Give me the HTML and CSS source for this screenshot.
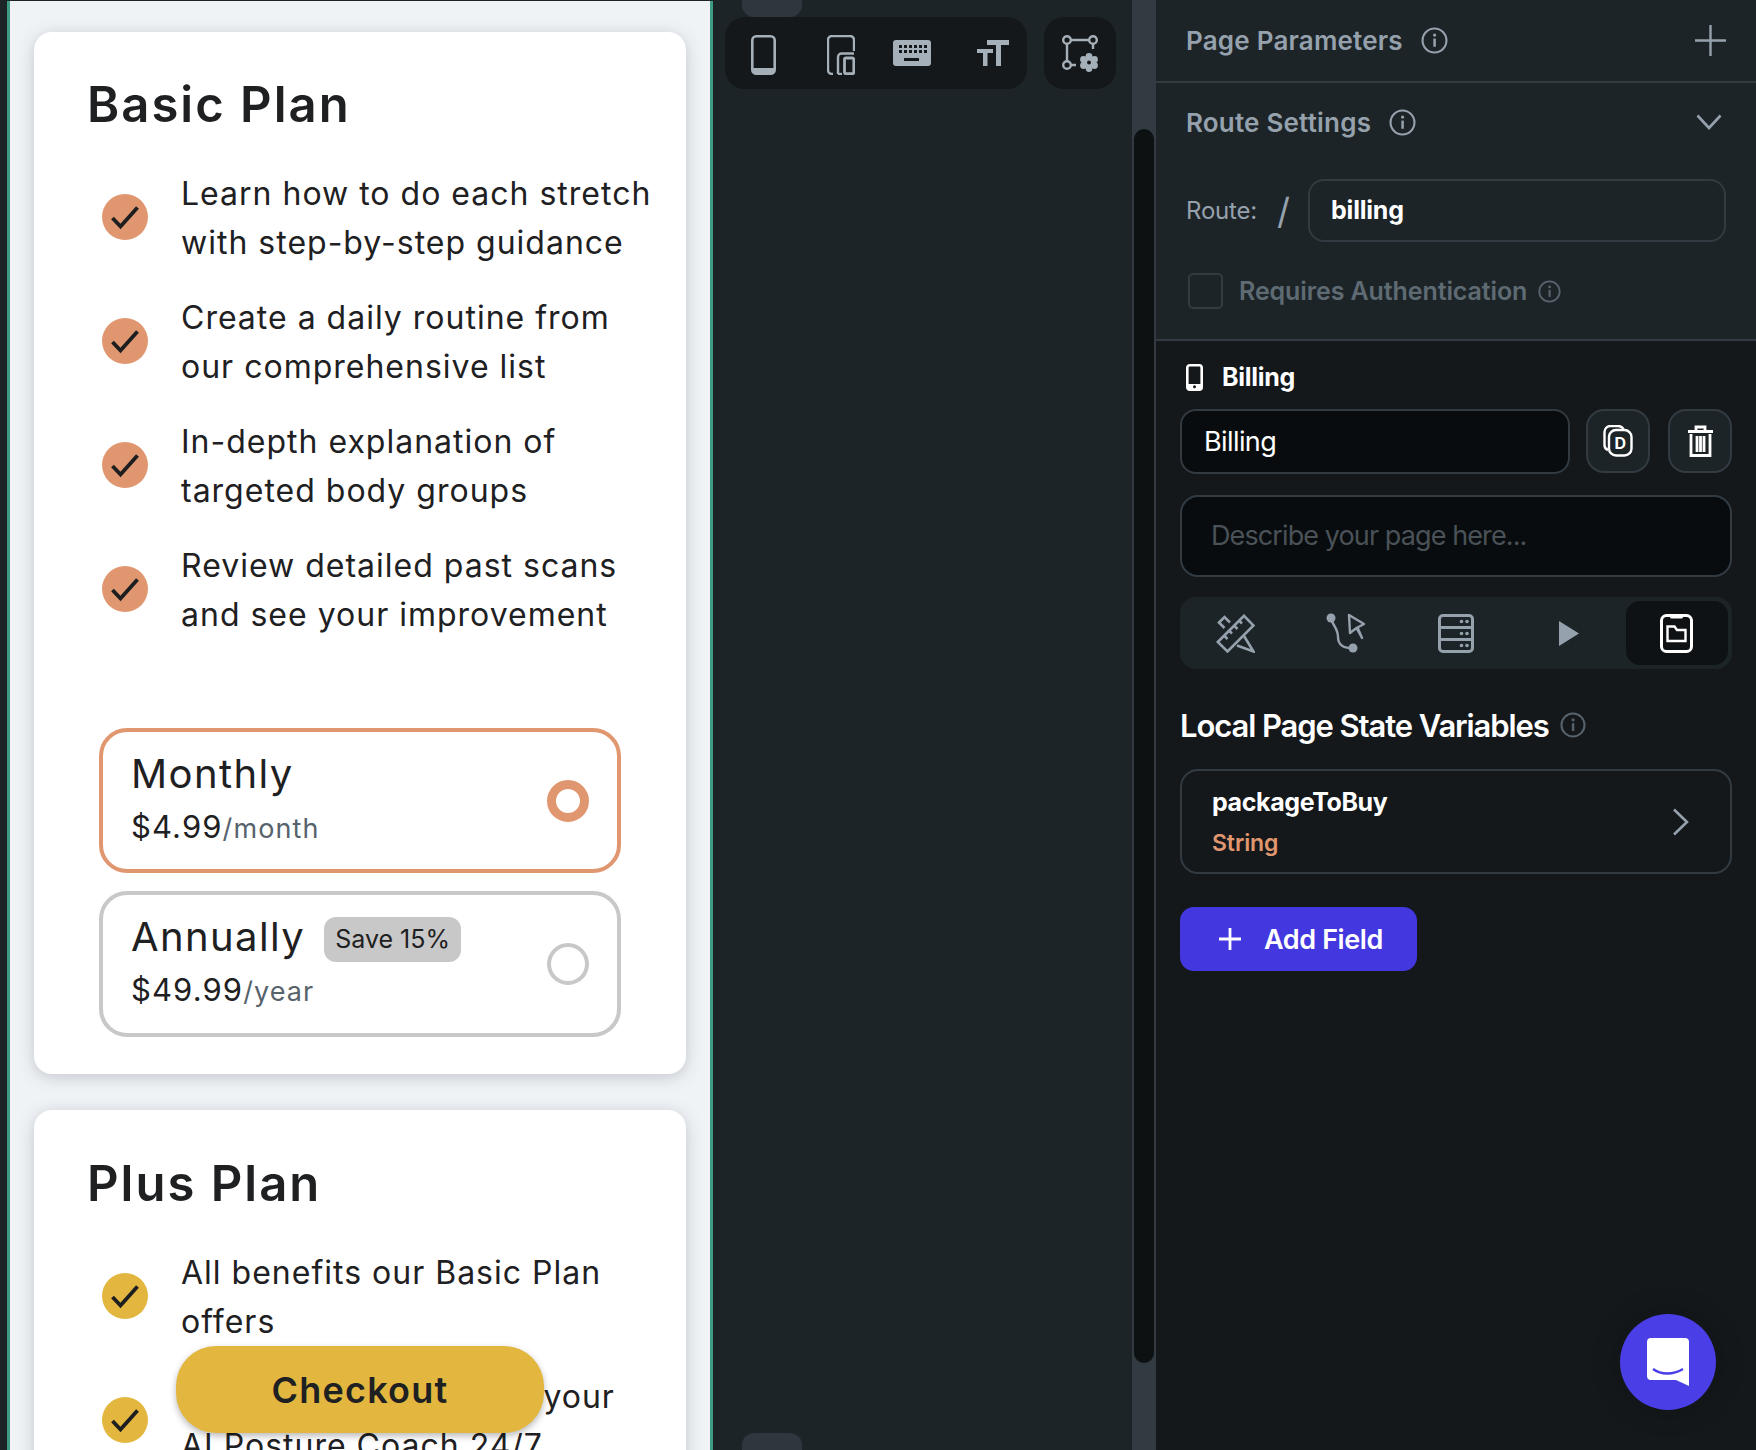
FILE: index.html
```html
<!DOCTYPE html>
<html lang="en">
<head>
<meta charset="utf-8">
<title>Billing</title>
<link rel="stylesheet" href="styles.css">
</head>
<body>
<svg class="defs" width="0" height="0" aria-hidden="true">
  <symbol id="info" viewBox="0 0 28 28"><circle cx="14" cy="14" r="12.4" fill="none" stroke="currentColor" stroke-width="2.2"/><rect x="12.8" y="12" width="2.6" height="8.5" fill="currentColor"/><circle cx="14.1" cy="8.4" r="1.7" fill="currentColor"/></symbol>
  <symbol id="check" viewBox="0 0 46 46"><circle cx="23" cy="23" r="23" fill="currentColor"/><path d="M10.500 24 L18.500 32.500 L35.500 13.500" fill="none" stroke="#1c1e20" stroke-width="3.800"/></symbol>
</svg>
<main class="app">
  <section class="preview">
    <article class="plan">
      <h2 class="plan-title">Basic Plan</h2>
      <ul class="features peach">
        <li class="feature"><svg class="tick"><use href="#check"/></svg><p>Learn how to do each stretch<br>with step-by-step guidance</p></li>
        <li class="feature"><svg class="tick"><use href="#check"/></svg><p>Create a daily routine from<br>our comprehensive list</p></li>
        <li class="feature"><svg class="tick"><use href="#check"/></svg><p>In-depth explanation of<br>targeted body groups</p></li>
        <li class="feature"><svg class="tick"><use href="#check"/></svg><p>Review detailed past scans<br>and see your improvement</p></li>
      </ul>
      <div class="options">
        <div class="option selected">
          <div class="option-text">
            <div class="option-name">Monthly</div>
            <div class="option-price">$4.99<span class="per">/month</span></div>
          </div>
          <span class="radio"></span>
        </div>
        <div class="option">
          <div class="option-text">
            <div class="option-name">Annually <span class="badge">Save 15%</span></div>
            <div class="option-price">$49.99<span class="per">/year</span></div>
          </div>
          <span class="radio"></span>
        </div>
      </div>
    </article>
    <article class="plan">
      <h2 class="plan-title">Plus Plan</h2>
      <ul class="features gold">
        <li class="feature"><svg class="tick"><use href="#check"/></svg><p>All benefits our Basic Plan<br>offers</p></li>
        <li class="feature"><svg class="tick"><use href="#check"/></svg><p>Unlimited advice from your<br>AI Posture Coach 24/7</p></li>
      </ul>
    </article>
    <button class="checkout">Checkout</button>
  </section>

  <section class="canvas">
    <span class="handle handle-top"></span>
    <span class="handle handle-bottom"></span>
    <div class="toolbars">
      <div class="toolbar tools">
        <svg class="t-phone" width="25" height="40" viewBox="0 0 25 40"><rect x="1.3" y="1.3" width="22.4" height="37.4" rx="4" fill="none" stroke="currentColor" stroke-width="2.6"/><path d="M1.3 33h22.4v2a4 4 0 0 1-4 4H5.300a4 4 0 0 1-4-4z" fill="currentColor"/></svg>
        <svg class="t-tablet" width="28" height="40" viewBox="0 0 28 40"><path d="M27 16V5a4 4 0 0 0-4-4H5a4 4 0 0 0-4 4v30a4 4 0 0 0 4 4h1" fill="none" stroke="currentColor" stroke-width="2.400"/><path d="M11 39v-17a3.500 3.500 0 0 1 3.500-3.500H27" fill="none" stroke="currentColor" stroke-width="2.400"/><path d="M11 39h4" stroke="currentColor" stroke-width="2.400"/><rect x="17.500" y="23" width="9.300" height="15.700" rx="1.500" fill="none" stroke="currentColor" stroke-width="2.800"/></svg>
        <svg class="t-keys" width="38" height="26" viewBox="0 0 38 26"><rect width="38" height="26" rx="3" fill="currentColor"/><g fill="#14181b"><rect x="6" y="5" width="3" height="3"/><rect x="11" y="5" width="3" height="3"/><rect x="16" y="5" width="3" height="3"/><rect x="21" y="5" width="3" height="3"/><rect x="26" y="5" width="3" height="3"/><rect x="31" y="5" width="3" height="3"/><rect x="6" y="10" width="3" height="3"/><rect x="11" y="10" width="3" height="3"/><rect x="16" y="10" width="3" height="3"/><rect x="21" y="10" width="3" height="3"/><rect x="26" y="10" width="3" height="3"/><rect x="31" y="10" width="3" height="3"/><rect x="11" y="18" width="15" height="3"/></g></svg>
        <svg class="t-size" width="32" height="26" viewBox="0 0 32 26"><path d="M10 0h22v5h-8v21h-5V5h-9zM0 9h16v4h-5.500v13H6V13H0z" fill="currentColor"/></svg>
      </div>
      <div class="toolbar graph">
        <svg width="36" height="37" viewBox="0 0 36 37"><g fill="none" stroke="currentColor" stroke-width="2.400"><circle cx="5" cy="5" r="3.800"/><circle cx="31" cy="5" r="3.800"/><circle cx="5" cy="30" r="3.800"/><path d="M9 5h18M5 9v17M9 30h5M31 9v5"/></g><g fill="currentColor"><circle cx="27" cy="21.500" r="3.400"/><circle cx="27" cy="33.500" r="3.400"/><circle cx="21.500" cy="24.500" r="3.400"/><circle cx="32.500" cy="24.500" r="3.400"/><circle cx="21.500" cy="30.500" r="3.400"/><circle cx="32.500" cy="30.500" r="3.400"/><circle cx="27" cy="27.500" r="4"/></g><circle cx="27" cy="27.500" r="2" fill="#14181b"/></svg>
      </div>
    </div>
  </section>

  <div class="scrolltrack"><span class="scrollthumb"></span></div>

  <aside class="panel">
    <div class="panel-top">
      <div class="section-row line">
        <div class="section-head"><h3>Page Parameters</h3><svg class="info-lg"><use href="#info"/></svg></div>
        <svg class="plus-icon" width="31" height="31" viewBox="0 0 31 31"><path d="M15.500 0v31M0 15.500h31" stroke="currentColor" stroke-width="2.400"/></svg>
      </div>
      <div class="section-row route-head">
        <div class="section-head"><h3>Route Settings</h3><svg class="info-lg"><use href="#info"/></svg></div>
        <svg class="chev-down" width="26" height="16" viewBox="0 0 26 16"><path d="M1.500 1.500 L13 14 L24.500 1.500" fill="none" stroke="currentColor" stroke-width="2.600"/></svg>
      </div>
      <div class="route">
        <span class="route-label">Route:</span>
        <span class="route-slash">/</span>
        <div class="route-input">billing</div>
      </div>
      <div class="auth">
        <span class="checkbox"></span>
        <span class="auth-label">Requires Authentication</span>
        <svg class="info-sm"><use href="#info"/></svg>
      </div>
    </div>

    <div class="panel-bottom">
      <div class="page-head">
        <svg width="17" height="27" viewBox="0 0 17 27"><rect x="1.300" y="1.300" width="14.400" height="24.400" rx="2.500" fill="none" stroke="#fff" stroke-width="2.600"/><path d="M1.300 20h14.400v4a2 2 0 0 1-2 2H3.300a2 2 0 0 1-2-2z" fill="#fff"/><circle cx="8.500" cy="22.800" r="1.500" fill="#14181b"/></svg>
        <span>Billing</span>
      </div>
      <div class="name-row">
        <div class="name-input">Billing</div>
        <button class="square-btn">
          <svg width="30" height="32" viewBox="0 0 30 32"><path d="M5 25 A5 5 0 0 1 1.500 20V7a6 6 0 0 1 6-6h8a6 6 0 0 1 5 3" fill="none" stroke="#fff" stroke-width="2.400"/><rect x="6" y="5" width="22.500" height="25.500" rx="7" fill="none" stroke="#fff" stroke-width="2.400"/><text x="17.300" y="24" class="dup-letter">D</text></svg>
        </button>
        <button class="square-btn">
          <svg width="25" height="32" viewBox="0 0 25 32"><path d="M0 6.500h25M8 6V2h9v4" fill="none" stroke="#fff" stroke-width="2.800"/><path d="M3 9v21.500h19V9M9 11v16M12.500 11v16M16 11v16" fill="none" stroke="#fff" stroke-width="2.800"/></svg>
        </button>
      </div>
      <div class="desc-input">Describe your page here...</div>
      <div class="tabs">
        <div class="tab">
          <svg width="39" height="39" viewBox="0 0 39 39"><g fill="none" stroke="currentColor" stroke-width="2.600"><path d="M1.800 28 L28 1.800 L37.500 11.500 L11.500 37.500 Z"/><path d="M8 21.500l3.500 3.500M13 16.500l3 3M18 11.500l3.500 3.500M23 6.500l3 3"/><path d="M14 8.500 L8.500 3 L3 8.500 L8.500 14"/><path d="M28 22 L37.500 37.500 L21 31.500"/></g></svg>
        </div>
        <div class="tab">
          <svg width="40" height="40" viewBox="0 0 40 40"><circle cx="5" cy="5" r="4.500" fill="currentColor"/><circle cx="27" cy="35" r="4.500" fill="currentColor"/><path d="M5 6 C8 14 12 16 12 24 C12 32 18 35 25 35" fill="none" stroke="currentColor" stroke-width="2.400"/><path d="M23 2 L38 11 L31.500 14.500 L36 25 L30.500 15 L24 20 Z" fill="none" stroke="currentColor" stroke-width="2.400" stroke-linejoin="round"/></svg>
        </div>
        <div class="tab">
          <svg width="36" height="39" viewBox="0 0 36 39"><rect x="1.500" y="1.500" width="33" height="36" rx="3.500" fill="none" stroke="currentColor" stroke-width="3"/><path d="M1 13.500h34M1 25.500h34" stroke="currentColor" stroke-width="2.800"/><g fill="currentColor"><circle cx="23.500" cy="7.500" r="1.800"/><circle cx="29" cy="7.500" r="1.800"/><circle cx="23.500" cy="19.500" r="1.800"/><circle cx="29" cy="19.500" r="1.800"/><circle cx="23.500" cy="31.500" r="1.800"/><circle cx="29" cy="31.500" r="1.800"/></g></svg>
        </div>
        <div class="tab tab-play">
          <svg width="20" height="25" viewBox="0 0 20 25"><path d="M0 0 L20 12.500 L0 25 Z" fill="currentColor"/></svg>
        </div>
        <div class="tab active">
          <svg width="33" height="39" viewBox="0 0 33 39"><rect x="1.500" y="1.500" width="30" height="36" rx="5" fill="none" stroke="#fff" stroke-width="3"/><path d="M10 1.500h13v1.500a1.500 1.500 0 0 1-1.500 1.500h-10A1.500 1.500 0 0 1 10 3z" fill="#fff"/><path d="M7.500 12.500h7l2.500 3.500h8.500v11h-18z" fill="none" stroke="#fff" stroke-width="2.400"/></svg>
        </div>
      </div>
      <div class="state-head"><h4>Local Page State Variables</h4><svg class="info-md"><use href="#info"/></svg></div>
      <div class="var-card">
        <div class="var-text">
          <div class="var-name">packageToBuy</div>
          <div class="var-type">String</div>
        </div>
        <svg class="chev-right" width="17" height="28" viewBox="0 0 17 28"><path d="M2 1.500 L15 14 L2 26.500" fill="none" stroke="currentColor" stroke-width="2.600"/></svg>
      </div>
      <button class="add-field">
        <svg width="22" height="22" viewBox="0 0 22 22"><path d="M11 0v22M0 11h22" stroke="#fff" stroke-width="2.800"/></svg>
        <span>Add Field</span>
      </button>
    </div>
    <button class="chat" aria-label="Chat">
      <svg width="42" height="48" viewBox="0 0 42 48"><path d="M4 0h34a4 4 0 0 1 4 4v44l-13-6H4a4 4 0 0 1-4-4V4a4 4 0 0 1 4-4z" fill="#fff"/><path d="M6 31 C14 37 26 37 36 31" fill="none" stroke="#4a3ee6" stroke-width="2.400"/></svg>
    </button>
  </aside>
</main>
</body>
</html>
```
FILE: styles.css
```css
* { box-sizing: border-box; }
html, body { margin: 0; padding: 0; height: 1450px; overflow: hidden; }
body { background: #1c2427; font-family: "Inter", "Liberation Sans", sans-serif; color: #14181b; }
button { font-family: inherit; border: 0; padding: 0; }
h2, h3, h4, p, ul { margin: 0; padding: 0; }
ul { list-style: none; }
.defs { position: absolute; }

.app { display: flex; width: 1756px; height: 1450px; overflow: hidden; }

/* phone preview */
.preview {
  position: relative; flex: none; width: 706px; height: 1449px; margin: 1px 0 0 7px; padding: 31px 24px 0;
  background: #f0f3f6; border-left: 3px solid #3d9b85; border-right: 3px solid #3d9b85; overflow: hidden;
}
.plan { background: #fff; border-radius: 18px; height: 1042px; margin-bottom: 36px; padding: 37px 0 0 54px; box-shadow: 0 3px 16px rgba(60, 70, 80, .26); }
.plan:last-of-type { height: 500px; margin-bottom: 0; padding-top: 38px; }
.plan-title { font-size: 49px; line-height: 72px; font-weight: 600; color: #1e2022; margin: 0 0 29px -1px; letter-spacing: 2px; }
.features { margin-left: 14px; display: flex; flex-direction: column; gap: 27px; }
.peach { color: #e0966f; }
.gold { color: #e3b73f; }
.feature { display: flex; align-items: center; gap: 33px; }
.tick { width: 46px; height: 46px; flex: none; margin-bottom: 3px; }
.feature p { font-size: 32px; line-height: 48.500px; color: #1e2022; white-space: nowrap; letter-spacing: 1px; }

.options { margin: 89px 0 0 11px; width: 522px; display: flex; flex-direction: column; gap: 18px; }
.option { height: 145px; border: 4px solid #c8c8c8; border-radius: 28px; padding: 0 28px 0 28px; display: flex; align-items: center; justify-content: space-between; }
.option + .option { height: 146px; }
.option.selected { border-color: #e0966f; }
.option-name { font-size: 40px; line-height: 50px; height: 50px; color: #1e2022; display: flex; align-items: center; gap: 19px; letter-spacing: 1.400px; position: relative; top: 1px; }
.option-price { font-size: 31px; line-height: 50px; margin-top: 4px; color: #1e2022; letter-spacing: 1.100px; }
.per { font-size: 27px; color: #57636c; }
.badge { font-size: 25px; line-height: 45px; height: 45px; padding: 0 11px; border-radius: 12px; background: #c8c8c8; position: relative; top: 2px; letter-spacing: 0; }
.radio { width: 42px; height: 42px; border-radius: 50%; border: 4px solid #c8c8c8; flex: none; }
.selected .radio { border: 9px solid #e0966f; }

.checkout {
  position: absolute; left: 166px; top: 1345px; width: 368px; height: 87px; border-radius: 40px;
  background: #e3b73f; color: #1e2022; font-size: 36px; font-weight: 600; letter-spacing: 1.200px; box-shadow: 0 3px 7px rgba(0, 0, 0, .28);
}

/* canvas */
.canvas { position: relative; flex: none; width: 419px; height: 1450px; padding: 17px 16px 0 12px; background: #1d2428; }
.handle { position: absolute; left: 29px; width: 60px; height: 17px; background: #2e373e; }
.handle-top { top: 0; border-radius: 0 0 12px 12px; }
.handle-bottom { bottom: 0; border-radius: 12px 12px 0 0; }
.toolbars { display: flex; gap: 17px; }
.toolbar { height: 72px; background: #14181b; border-radius: 20px; display: flex; align-items: center; color: #a5b0b9; }
.tools { width: 302px; padding-left: 26px; }
.graph { width: 72px; justify-content: center; }
.t-phone { margin: 4px 51px 0 0; }
.t-tablet { margin: 4px 38px 0 0; }
.t-keys { margin-right: 46px; }

.scrolltrack { flex: none; width: 24px; height: 1450px; background: #323a42; padding: 129px 2px 0; }
.scrollthumb { display: block; height: 1234px; border-radius: 11px; background: #0d1112; }

/* right panel */
.panel { position: relative; flex: none; width: 600px; height: 1450px; background: #14181b; }
.panel-top { height: 341px; background: #1d2428; border-bottom: 2px solid #323a42; color: #95a1ac; }
.section-row { display: flex; align-items: center; justify-content: space-between; height: 80px; padding: 0 30px 0 30px; }
.section-row.line { height: 83px; border-bottom: 2px solid #323a42; }
.section-row.route-head { height: 78px; }
.section-head { display: flex; align-items: center; gap: 18px; }
.section-head h3 { font-size: 26px; font-weight: 600; letter-spacing: .2px; }
.info-lg { width: 27px; height: 27px; }
.info-md { width: 26px; height: 26px; color: #57636c; }
.info-sm { width: 23px; height: 23px; color: #57636c; margin-left: 11px; }
.chev-down { margin-right: 4px; }
.route { display: flex; align-items: center; margin: 18px 30px 0 30px; height: 63px; }
.route-label { font-size: 24px; letter-spacing: -.2px; width: 91px; }
.route-slash { font-size: 36px; font-weight: 400; width: 31px; }
.route-input { flex: 1; height: 63px; border: 2px solid #323a42; border-radius: 16px; line-height: 59px; padding-left: 21px; color: #fff; font-size: 25px; font-weight: 700; letter-spacing: -.2px; }
.auth { display: flex; align-items: center; margin: 31px 0 0 32px; height: 36px; color: #5f6b73; }
.checkbox { width: 35px; height: 36px; border: 2px solid #323a42; border-radius: 5px; margin-right: 16px; }
.auth-label { font-size: 25px; font-weight: 600; letter-spacing: -.1px; }

.panel-bottom { padding: 21px 24px 0 24px; }
.page-head { display: flex; align-items: center; gap: 19px; height: 30px; padding-left: 6px; color: #fff; font-size: 25px; font-weight: 700; letter-spacing: -.3px; }
.name-row { display: flex; gap: 16px; margin-top: 17px; }
.name-input { width: 391px; height: 65px; background: #090c0e; border: 2px solid #323a42; border-radius: 16px; color: #fff; font-size: 27px; line-height: 61px; padding-left: 22px; letter-spacing: -.6px; }
.name-row .square-btn + .square-btn { margin-left: 2px; }
.square-btn { width: 64px; height: 64px; background: #1d2428; border: 2px solid #323a42; border-radius: 18px; display: flex; align-items: center; justify-content: center; }
.dup-letter { font: 700 16px "Inter", sans-serif; fill: #fff; text-anchor: middle; }
.desc-input { margin-top: 21px; height: 82px; background: #090c0e; border: 2px solid #323a42; border-radius: 18px; color: #4a5258; font-size: 27px; line-height: 78px; padding-left: 29px; letter-spacing: -.9px; }
.tabs { margin-top: 20px; height: 72px; background: #1d2428; border-radius: 16px; display: grid; grid-template-columns: repeat(5, 1fr); color: #95a1ac; }
.tab { display: flex; align-items: center; justify-content: center; }
.tab-play { padding-left: 5px; }
.tab.active { background: #0e1214; border-radius: 14px; margin: 4px; }
.state-head { display: flex; align-items: center; gap: 11px; margin-top: 36px; height: 40px; }
.state-head h4 { font-size: 31px; font-weight: 600; color: #fff; letter-spacing: -1.100px; }
.var-card { margin-top: 24px; height: 105px; border: 2px solid #323a42; border-radius: 18px; display: flex; align-items: center; justify-content: space-between; padding: 0 41px 0 30px; color: #95a1ac; }
.var-text { padding-top: 2px; }
.var-name { font-size: 25px; font-weight: 700; color: #fff; letter-spacing: -.4px; line-height: 34px; }
.var-type { font-size: 23px; font-weight: 600; color: #e0966f; line-height: 34px; margin-top: 7px; letter-spacing: -.1px; }
.add-field { margin-top: 33px; width: 237px; height: 64px; border-radius: 14px; background: #4338e0; color: #fff; display: flex; align-items: center; padding-left: 39px; gap: 23px; font-size: 27px; font-weight: 600; letter-spacing: -.4px; }
.chat { position: absolute; left: 464px; top: 1314px; width: 96px; height: 96px; border-radius: 50%; background: #4a3ee6; display: flex; align-items: center; justify-content: center; box-shadow: 0 0 30px rgba(0, 0, 0, .2); }
```
